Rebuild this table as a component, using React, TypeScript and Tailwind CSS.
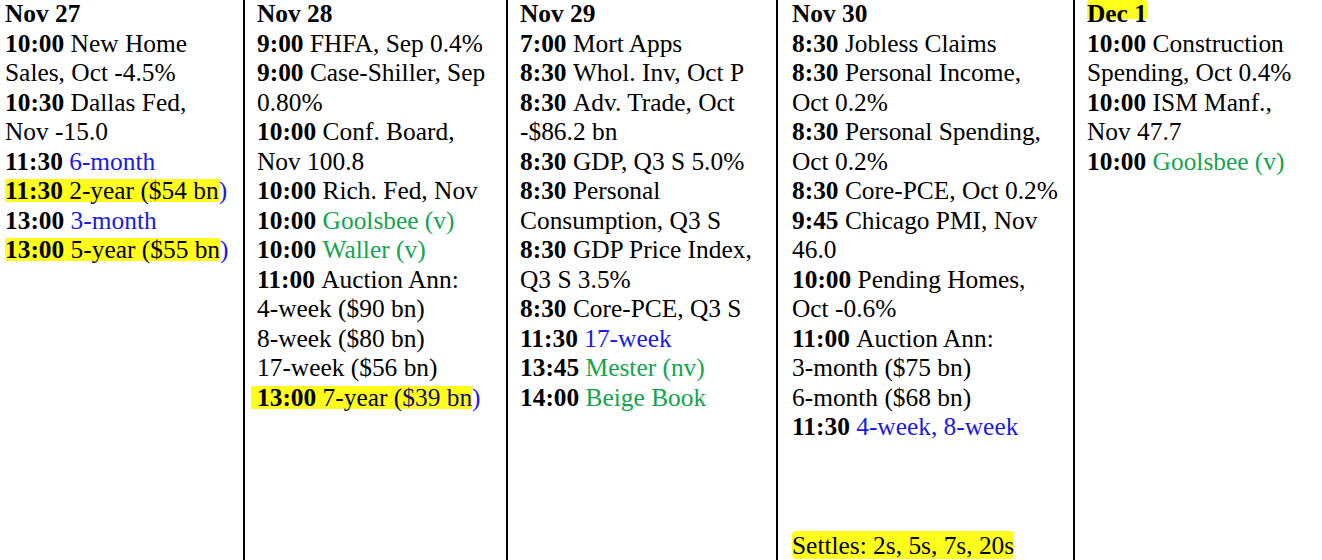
import React from "react";

type Tone = "black" | "blue" | "green";

const toneClass: Record<Tone, string> = {
  black: "text-black",
  blue: "text-[#1a1ae6]",
  green: "text-[#12a44e]",
};

// marker-style highlight, a bit shorter than the line box
const markerBand =
  "bg-[linear-gradient(to_bottom,transparent_11%,#ffff1a_11%,#ffff1a_92%,transparent_92%)]";

function Hl({
  children,
  band = markerBand,
}: {
  children: React.ReactNode;
  band?: string;
}) {
  return <span className={`${band} rounded-[4px]`}>{children}</span>;
}

function Entry({
  time,
  lines,
  tone = "black",
}: {
  time: string;
  lines: string[];
  tone?: Tone;
}) {
  return (
    <div className={toneClass[tone]}>
      {lines.map((line, i) => (
        <div key={i} className="whitespace-nowrap">
          {i === 0 && <b className="text-black">{time} </b>}
          {line}
        </div>
      ))}
    </div>
  );
}

function Column({
  className,
  children,
}: {
  className: string;
  children: React.ReactNode;
}) {
  return (
    <div className={`h-full shrink-0 overflow-hidden ${className}`}>
      <div className="-mt-[1px]">{children}</div>
    </div>
  );
}

export default function App() {
  return (
    <div className="w-[1322px] h-[560px] bg-white flex text-black text-[25.4px] leading-[29.5px] font-['Liberation_Serif','Times_New_Roman',serif] overflow-hidden">
      <Column className="w-[243px] pl-[5px]">
        <div className="font-bold">Nov 27</div>
        <Entry time="10:00" lines={["New Home", "Sales, Oct -4.5%"]} />
        <Entry time="10:30" lines={["Dallas Fed,", "Nov -15.0"]} />
        <Entry time="11:30" lines={["6-month"]} tone="blue" />
        <div className="whitespace-nowrap">
          <Hl>
            <b>11:30</b> 2-year ($54 bn
          </Hl>
          <span className={toneClass.blue}>)</span>
        </div>
        <Entry time="13:00" lines={["3-month"]} tone="blue" />
        <div className="whitespace-nowrap">
          <Hl>
            <b>13:00</b> 5-year ($55 bn
          </Hl>
          <span className={toneClass.blue}>)</span>
        </div>
      </Column>

      <Column className="w-[263px] border-l-2 border-black pl-[12px]">
        <div className="font-bold">Nov 28</div>
        <Entry time="9:00" lines={["FHFA, Sep 0.4%"]} />
        <Entry time="9:00" lines={["Case-Shiller, Sep", "0.80%"]} />
        <Entry time="10:00" lines={["Conf. Board,", "Nov 100.8"]} />
        <Entry time="10:00" lines={["Rich. Fed, Nov"]} />
        <Entry time="10:00" lines={["Goolsbee (v)"]} tone="green" />
        <Entry time="10:00" lines={["Waller (v)"]} tone="green" />
        <Entry
          time="11:00"
          lines={[
            "Auction Ann:",
            "4-week ($90 bn)",
            "8-week ($80 bn)",
            "17-week ($56 bn)",
          ]}
        />
        <div className="whitespace-nowrap -ml-[6px]">
          <Hl>
            <span className="pl-[6px]">
              <b>13:00</b> 7-year (
              <span className="text-[#101070]">$39 bn</span>
            </span>
          </Hl>
          <span className={toneClass.blue}>)</span>
        </div>
      </Column>

      <Column className="w-[270px] border-l-2 border-black pl-[12px]">
        <div className="font-bold">Nov 29</div>
        <Entry time="7:00" lines={["Mort Apps"]} />
        <Entry time="8:30" lines={["Whol. Inv, Oct P"]} />
        <Entry time="8:30" lines={["Adv. Trade, Oct", "-$86.2 bn"]} />
        <Entry time="8:30" lines={["GDP, Q3 S 5.0%"]} />
        <Entry time="8:30" lines={["Personal", "Consumption, Q3 S"]} />
        <Entry time="8:30" lines={["GDP Price Index,", "Q3 S 3.5%"]} />
        <Entry time="8:30" lines={["Core-PCE, Q3 S"]} />
        <Entry time="11:30" lines={["17-week"]} tone="blue" />
        <Entry time="13:45" lines={["Mester (nv)"]} tone="green" />
        <Entry time="14:00" lines={["Beige Book"]} tone="green" />
      </Column>

      <Column className="w-[297px] border-l-2 border-black pl-[14px]">
        <div className="font-bold">Nov 30</div>
        <Entry time="8:30" lines={["Jobless Claims"]} />
        <Entry time="8:30" lines={["Personal Income,", "Oct 0.2%"]} />
        <Entry time="8:30" lines={["Personal Spending,", "Oct 0.2%"]} />
        <Entry time="8:30" lines={["Core-PCE, Oct 0.2%"]} />
        <Entry time="9:45" lines={["Chicago PMI, Nov", "46.0"]} />
        <Entry time="10:00" lines={["Pending Homes,", "Oct -0.6%"]} />
        <Entry
          time="11:00"
          lines={["Auction Ann:", "3-month ($75 bn)", "6-month ($68 bn)"]}
        />
        <Entry time="11:30" lines={["4-week, 8-week"]} tone="blue" />
        <div className="h-[89px]" />
        <div className="whitespace-nowrap">
          <Hl band="bg-[#ffff1a]">Settles: 2s, 5s, 7s, 20s</Hl>
        </div>
      </Column>

      <Column className="flex-1 border-l-2 border-black pl-[12px]">
        <div className="font-bold">
          <Hl band="bg-[linear-gradient(to_bottom,#ffff1a_0%,#ffff1a_72%,transparent_72%)]">
            Dec 1
          </Hl>
        </div>
        <Entry time="10:00" lines={["Construction", "Spending, Oct 0.4%"]} />
        <Entry time="10:00" lines={["ISM Manf.,", "Nov 47.7"]} />
        <Entry time="10:00" lines={["Goolsbee (v)"]} tone="green" />
      </Column>
    </div>
  );
}
